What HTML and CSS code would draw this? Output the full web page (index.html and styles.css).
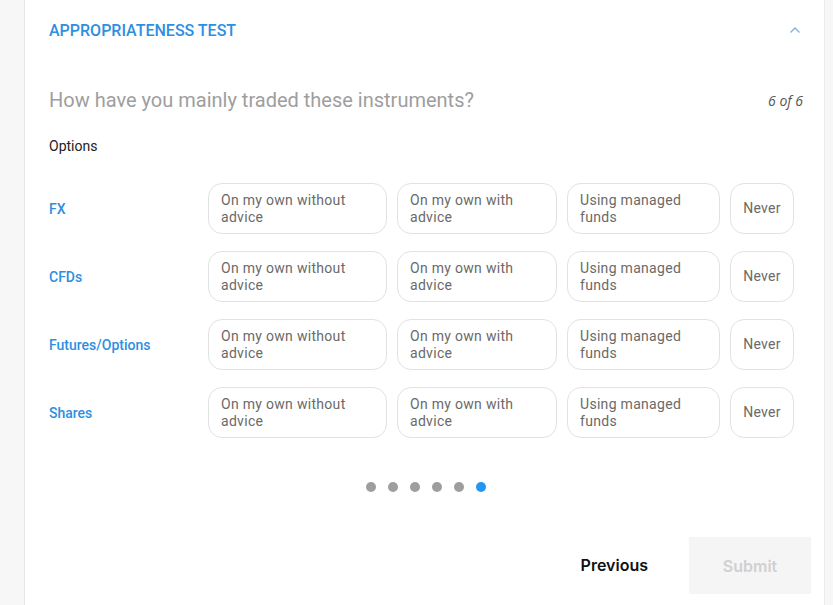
FILE: index.html
```html
<!DOCTYPE html>
<html>
<head>
<meta charset="utf-8">
<link rel="stylesheet" href="styles.css">
</head>
<body>
<div class="card">
  <div class="header">
    <div class="title">APPROPRIATENESS TEST</div>
    <svg class="chev" width="12" height="8" viewBox="0 0 12 8"><polyline points="1.5,6.5 6,2 10.5,6.5" fill="none" stroke="#7fb1e6" stroke-width="1.3"/></svg>
  </div>
  <div class="qrow">
    <div class="question">How have you mainly traded these instruments?</div>
    <div class="count">6 of 6</div>
  </div>
  <div class="sub">Options</div>
  <div class="grid">
    <div class="label">FX</div>
    <div class="opt">On my own without advice</div>
    <div class="opt">On my own with advice</div>
    <div class="opt">Using managed funds</div>
    <div class="opt never">Never</div>

    <div class="label">CFDs</div>
    <div class="opt">On my own without advice</div>
    <div class="opt">On my own with advice</div>
    <div class="opt">Using managed funds</div>
    <div class="opt never">Never</div>

    <div class="label">Futures/Options</div>
    <div class="opt">On my own without advice</div>
    <div class="opt">On my own with advice</div>
    <div class="opt">Using managed funds</div>
    <div class="opt never">Never</div>

    <div class="label">Shares</div>
    <div class="opt">On my own without advice</div>
    <div class="opt">On my own with advice</div>
    <div class="opt">Using managed funds</div>
    <div class="opt never">Never</div>
  </div>
  <div class="dots">
    <span class="dot"></span><span class="dot"></span><span class="dot"></span><span class="dot"></span><span class="dot"></span><span class="dot active"></span>
  </div>
  <div class="actions">
    <div class="prev">Previous</div>
    <div class="submit">Submit</div>
  </div>
</div>
</body>
</html>
```

FILE: styles.css
```css
html, body {
  margin: 0;
  padding: 0;
  background: #f7f7f7;
  font-family: Roboto, "Liberation Sans", sans-serif;
  height: 605px;
  overflow: hidden;
}
.card {
  margin-left: 24px;
  width: 801px;
  height: 605px;
  background: #fff;
  border-left: 1px solid #e6e6e6;
  border-right: 1px solid #ebebeb;
  padding-left: 24px;
  box-sizing: border-box;
}
.header {
  display: flex;
  align-items: center;
  justify-content: space-between;
  height: 60px;
  padding-right: 23px;
}
.title {
  color: #2e8fe0;
  font-size: 16px;
  font-weight: 500;
}
.chev { display: block; margin-top: 0; }
.qrow {
  display: flex;
  align-items: center;
  justify-content: space-between;
  margin-top: 26px;
  height: 28px;
  padding-right: 21px;
}
.question {
  color: #9e9e9e;
  font-size: 20px;
}
.count {
  font-family: "Open Sans", sans-serif;
  font-style: italic;
  font-size: 14px;
  color: #555;
}
.sub {
  margin-top: 24px;
  font-size: 14px;
  color: #222;
  line-height: 16px;
}
.grid {
  margin-top: 29px;
  display: grid;
  grid-template-columns: 149px 179px 160px 153px 64px;
  grid-auto-rows: 51px;
  column-gap: 10px;
  row-gap: 17px;
}
.label {
  display: flex;
  align-items: center;
  color: #2e8fe0;
  font-size: 14px;
  font-weight: 500;
  white-space: nowrap;
}
.opt {
  border: 1.5px solid #e2e2e2;
  border-radius: 14px;
  box-sizing: border-box;
  padding: 8px 10px 0 12px;
  color: #6a6a6a;
  font-size: 14px;
  line-height: 17px;
  letter-spacing: 0.3px;
}
.opt.never {
  display: flex;
  align-items: center;
  justify-content: center;
  padding: 0;
}
.dots {
  display: flex;
  justify-content: center;
  gap: 12px;
  margin-top: 44px;
  padding-right: 24px;
  margin-left: 2px;
}
.dot {
  width: 10px;
  height: 10px;
  border-radius: 50%;
  background: #9e9e9e;
}
.dot.active { background: #2196f3; }
.actions {
  display: flex;
  justify-content: flex-end;
  align-items: center;
  gap: 41px;
  margin-top: 45px;
  padding-right: 13px;
}
.prev {
  font-family: Inter, sans-serif;
  font-weight: 600;
  font-size: 16px;
  color: #111;
  margin-top: -2px;
}
.submit {
  width: 122px;
  height: 57px;
  background: #f5f5f5;
  color: #d0d0d0;
  font-family: Inter, sans-serif;
  font-weight: 600;
  font-size: 16px;
  display: flex;
  align-items: center;
  justify-content: center;
}
```
